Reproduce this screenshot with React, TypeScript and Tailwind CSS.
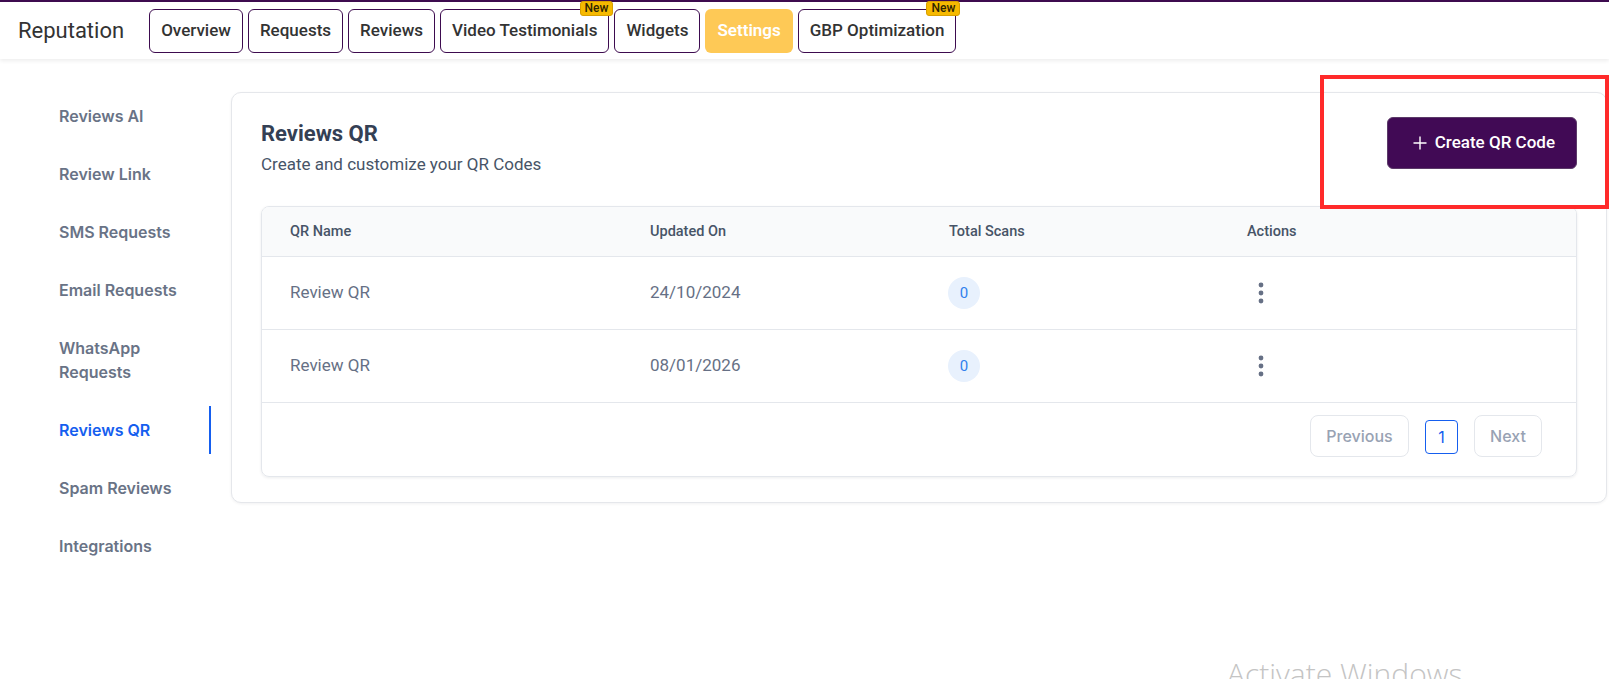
import React from "react";

const tabs = [
  { label: "Overview" },
  { label: "Requests" },
  { label: "Reviews" },
  { label: "Video Testimonials", badge: true },
  { label: "Widgets" },
  { label: "Settings", active: true },
  { label: "GBP Optimization", badge: true },
];

const sideItems = [
  "Reviews AI",
  "Review Link",
  "SMS Requests",
  "Email Requests",
  "WhatsApp Requests",
  "Reviews QR",
  "Spam Reviews",
  "Integrations",
];

const rows = [
  { name: "Review QR", date: "24/10/2024", scans: 0 },
  { name: "Review QR", date: "08/01/2026", scans: 0 },
];

function Kebab() {
  return (
    <svg width="6" height="22" viewBox="0 0 6 22" className="block">
      <circle cx="3" cy="3" r="2.4" fill="#667085" />
      <circle cx="3" cy="11" r="2.4" fill="#667085" />
      <circle cx="3" cy="19" r="2.4" fill="#667085" />
    </svg>
  );
}

export default function App() {
  return (
    <div className="relative w-[1609px] h-[679px] overflow-hidden bg-white font-['Roboto',sans-serif]">
      {/* Top header */}
      <header className="relative z-10 h-[59px] border-t-2 border-[#3d0b4f] bg-white shadow-[0_2px_4px_rgba(0,0,0,0.07)] flex items-center">
        <div className="ml-[18px] text-[22px] text-[#333333] leading-none">Reputation</div>
        <nav className="ml-[25px] flex items-center gap-[5px]">
          {tabs.map((t) =>
            t.active ? (
              <div
                key={t.label}
                className="h-[44px] px-[12px] rounded-[6px] bg-[#fec956] text-white font-semibold text-[17px] flex items-center"
              >
                {t.label}
              </div>
            ) : (
              <div
                key={t.label}
                className="relative h-[44px] px-[11px] rounded-[6px] border border-[#3d0b4f] text-[#333333] font-medium text-[17px] flex items-center"
              >
                {t.label}
                {t.badge && (
                  <span className="absolute -top-[9px] -right-[5px] h-[15px] px-[4px] rounded-[3px] bg-[#f6b900] border border-[#d89f00] text-[12px] leading-[13px] font-medium text-[#2f2500]">
                    New
                  </span>
                )}
              </div>
            )
          )}
        </nav>
      </header>

      {/* Body */}
      <div className="flex items-start pt-[33px]">
        {/* Sidebar */}
        <aside className="w-[211px] shrink-0 pl-[59px] flex flex-col gap-[10px] font-['Inter',sans-serif]">
          {sideItems.map((s) => {
            const active = s === "Reviews QR";
            return (
              <div
                key={s}
                className={
                  active
                    ? "py-[12px] pr-[16px] leading-[24px] text-[16px] font-semibold text-[#155eef] border-r-2 border-[#155eef]"
                    : "py-[12px] pr-[18px] leading-[24px] text-[16px] font-semibold text-[#697386] border-r-2 border-transparent"
                }
              >
                {s}
              </div>
            );
          })}
        </aside>

        {/* Card */}
        <main className="ml-[20px] mr-[2px] flex-1 rounded-[10px] border border-[#e5e7eb] bg-white shadow-[0_1px_3px_rgba(16,24,40,0.06)] px-[29px] pt-[24px] pb-[25px]">
          <div className="flex justify-between items-start">
            <div className="pt-[3px]">
              <h1 className="text-[22px] leading-[28px] font-bold text-[#344054]">Reviews QR</h1>
              <p className="mt-[4px] text-[17px] leading-[24px] text-[#475467]">
                Create and customize your QR Codes
              </p>
            </div>
            <button className="h-[52px] pl-[25px] pr-[21px] rounded-[6px] bg-[#410a55] border border-[#5b3a68] text-white text-[17px] font-medium flex items-center gap-[8px]">
              <svg width="14" height="14" viewBox="0 0 14 14">
                <path d="M7 0.5V13.5M0.5 7H13.5" stroke="white" strokeWidth="1.4" />
              </svg>
              Create QR Code
            </button>
          </div>

          {/* Table */}
          <div className="mt-[30px] rounded-[8px] border border-[#e4e7ec] overflow-hidden shadow-[0_1px_3px_rgba(16,24,40,0.08)]">
            <div className="h-[50px] bg-[#f9fafb] border-b border-[#e4e7ec] grid grid-cols-[360px_299px_298px_1fr] items-center text-[14.5px] font-medium text-[#475467]">
              <div className="pl-[28px]">QR Name</div>
              <div className="pl-[28px]">Updated On</div>
              <div className="pl-[28px]">Total Scans</div>
              <div className="pl-[28px]">Actions</div>
            </div>
            {rows.map((r, i) => (
              <div
                key={i}
                className="h-[73px] border-b border-[#e4e7ec] grid grid-cols-[360px_299px_298px_1fr] items-center text-[17px] text-[#667085]"
              >
                <div className="pl-[28px]">{r.name}</div>
                <div className="pl-[28px]">{r.date}</div>
                <div className="pl-[27px]">
                  <span className="w-[32px] h-[32px] rounded-full bg-[#e8f1fd] text-[#2f80ed] text-[15px] flex items-center justify-center">
                    {r.scans}
                  </span>
                </div>
                <div className="pl-[39px]">
                  <Kebab />
                </div>
              </div>
            ))}
            <div className="h-[73px] flex justify-end items-start pt-[12px] pr-[34px] gap-[16px] font-['Inter',sans-serif]">
              <div className="h-[42px] w-[99px] rounded-[8px] border border-[#e4e7ec] text-[16px] font-medium text-[#98a2b3] flex items-center justify-center">
                Previous
              </div>
              <div className="mt-[5px] h-[34px] w-[33px] rounded-[4px] border border-[#155eef] text-[16px] text-[#155eef] flex items-center justify-center">
                1
              </div>
              <div className="h-[42px] w-[68px] rounded-[8px] border border-[#e4e7ec] text-[16px] font-medium text-[#98a2b3] flex items-center justify-center">
                Next
              </div>
            </div>
          </div>
        </main>
      </div>

      {/* Red annotation */}
      <div className="absolute left-[1320px] top-[75px] w-[289px] h-[134px] border-[4px] border-[#ff2a2a] pointer-events-none" />

      {/* Windows watermark */}
      <div className="absolute left-[1227px] top-[659px] text-[30px] leading-none font-light text-[#c4c4c4] font-['Open_Sans',sans-serif] whitespace-nowrap">
        Activate Windows
      </div>
    </div>
  );
}
